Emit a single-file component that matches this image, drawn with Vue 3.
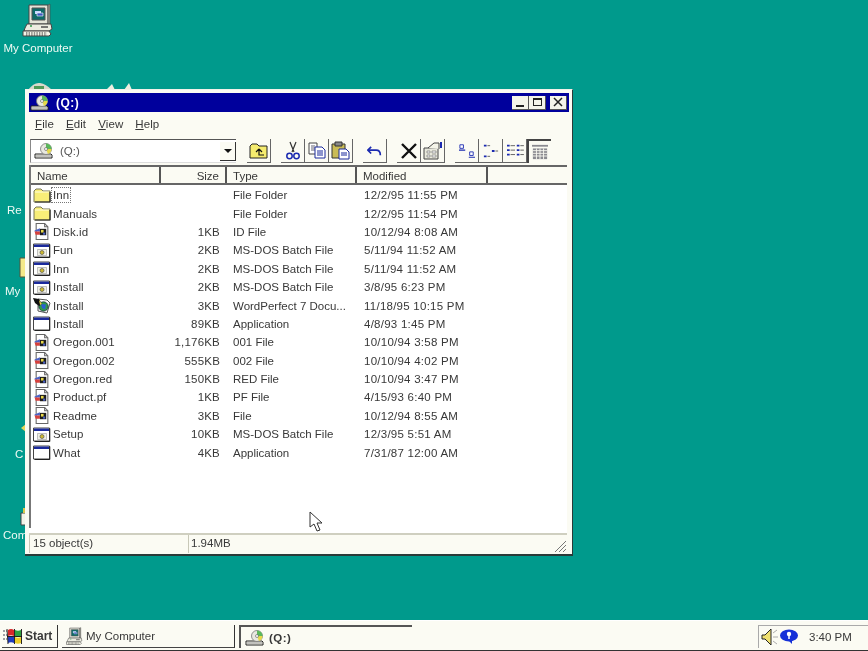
<template>
  <div class="desktop">
    <svg class="sprites" width="0" height="0" aria-hidden="true">
      <defs>
        <symbol id="i-drive" viewBox="0 0 20 16">
          <path d="M1 11h16l1 1v3H1z" fill="#fbfbf3" stroke="#222" stroke-width="1"/>
          <path d="M2 13h15" stroke="#888"/>
          <circle cx="12" cy="6" r="5.5" fill="#e8e8e0" stroke="#777" stroke-width=".8"/>
          <path d="M12 6V.5A5.5 5.5 0 0 1 17.5 6z" fill="#5bb85b"/>
          <path d="M12 6h5.5A5.5 5.5 0 0 1 14 11z" fill="#e6d94a"/>
          <circle cx="12" cy="6" r="1.5" fill="#fff" stroke="#555" stroke-width=".6"/>
        </symbol>
        <symbol id="i-folder" viewBox="0 0 18 15">
          <path d="M1 3l2-2h5l2 2h7v11H1z" fill="#f8ee78" stroke="#77775a"/>
          <path d="M2 4h14" stroke="#fffde0"/>
          <path d="M17 4v10H2" fill="none" stroke="#222" stroke-width="1.2"/>
        </symbol>
        <symbol id="i-doc" viewBox="0 0 16 16">
          <path d="M2.500.5h8l3 3v12h-11z" fill="#fff" stroke="#666"/>
          <path d="M10.500.5v3h3" fill="none" stroke="#666"/>
          <path d="M1 7l5-2v3H1z" fill="#4a62c8"/>
          <path d="M1 8h5v3H2z" fill="#d8403c"/>
          <path d="M6 5.500h6v6H6z" fill="#1c1c1c"/>
          <path d="M7 6.500h2.500V9H7z" fill="#e8d84a"/>
          <path d="M9 9h2v2H9z" fill="#4a62c8"/>
        </symbol>
        <symbol id="i-bat" viewBox="0 0 18 16">
          <path d="M.5 1.5h16v13H.5z" fill="#fff" stroke="#444"/>
          <path d="M1 2h15v2.5H1z" fill="#1b2a9c"/>
          <path d="M16.8 2v13H1.5" fill="none" stroke="#222"/>
          <path d="M4.5 7h9v6h-9z" fill="#f0f0e4" stroke="#999" stroke-width=".6"/>
          <circle cx="9" cy="10" r="2" fill="#cdb92e" stroke="#555" stroke-width=".7"/>
        </symbol>
        <symbol id="i-app" viewBox="0 0 18 16">
          <path d="M.5 1.5h16v13H.5z" fill="#fff" stroke="#444"/>
          <path d="M1 2h15v2.5H1z" fill="#1b2a9c"/>
          <path d="M16.8 2v13H1.5" fill="none" stroke="#222"/>
        </symbol>
        <symbol id="i-wp" viewBox="0 0 18 17">
          <path d="M5 2l9 1 3 3-3 10-9-2z" fill="#fff" stroke="#555"/>
          <circle cx="10.500" cy="9.500" r="4.700" fill="#2f9a4a" stroke="#123" stroke-width=".7"/>
          <path d="M8 7l5 .5-1 5-3-1.500z" fill="#2a5fd0"/>
          <path d="M0 1l6 1 3 5-3 2-4-3z" fill="#101010"/>
          <path d="M6 3l3 4-2 1z" fill="#e8d84a"/>
        </symbol>
        <symbol id="i-computer" viewBox="0 0 34 34">
          <path d="M7 2h19v19H7z" fill="#e4e4d8" stroke="#444"/>
          <path d="M26 2l2-1v20l-2 1z" fill="#9c9c90" stroke="#444" stroke-width=".6"/>
          <path d="M10 5h13v12H10z" fill="#0f6a68" stroke="#555"/>
          <path d="M13 8h6v3h-6z" fill="#c8d8ff"/>
          <path d="M15 10h6v3h-6z" fill="#3c58c0" stroke="#fff" stroke-width=".6"/>
          <path d="M5 21h24l1 5-3 2H2l1-3z" fill="#ececE0" stroke="#444"/>
          <path d="M19 24h7" stroke="#444" stroke-width="1.4"/>
          <path d="M8 23h2" stroke="#2e9a4a" stroke-width="1.4"/>
          <path d="M1 28h26l2 3-2 2H1z" fill="#f4f4e8" stroke="#444"/>
          <path d="M4 30h21M4 32h21" stroke="#333" stroke-dasharray="1.4 1.2"/>
        </symbol>
      </defs>
    </svg>

    <!-- desktop icons, mostly hidden behind the window -->
    <div class="desk-icon computer">
      <svg width="34" height="34"><use href="#i-computer"/></svg>
      <span>My Computer</span>
    </div>
    <span class="desk-label" style="left: 7px; top: 204px">Re</span>
    <span class="desk-label" style="left: 5px; top: 285px">My</span>
    <span class="desk-label" style="left: 15px; top: 448px">C</span>
    <span class="desk-label" style="left: 3px; top: 529px">Com</span>
    <svg class="peek" style="left: 26px; top: 82px" width="28" height="8"><path d="M2 8q6-8 12-7t12 7z" fill="#d8d8cc"/><path d="M8 4h10v4H8z" fill="#4f9a58"/></svg>
    <svg class="peek" style="left: 104px; top: 82px" width="34" height="8"><path d="M2 8l6-6 3 6zM20 8l5-7 3 7z" fill="#eeeee0"/></svg>
    <svg class="peek" style="left: 19px; top: 256px" width="8" height="22"><path d="M1 2h7v19H1z" fill="#f4e98a" stroke="#55553a"/></svg>
    <svg class="peek" style="left: 21px; top: 424px" width="6" height="8"><path d="M5 0v8L0 4z" fill="#e6d85a"/></svg>
    <svg class="peek" style="left: 19px; top: 508px" width="8" height="18"><path d="M2 5h6v12H2z" fill="#f4f4e8" stroke="#444"/><path d="M5 0v5" stroke="#d8c84a" stroke-width="2"/></svg>

    <section class="window">
      <header class="title-bar">
        <svg width="20" height="16"><use href="#i-drive"/></svg>
        <strong>(Q:)</strong>
        <div class="win-buttons">
          <button class="win-btn"><i class="glyph-min"></i></button>
          <button class="win-btn"><i class="glyph-max"></i></button>
          <button class="win-btn close">
            <svg width="10" height="10"><path d="M1 1l8 8M9 1l-8 8" stroke="#222" stroke-width="1.500"/></svg>
          </button>
        </div>
      </header>

      <nav class="menu-bar">
        <span v-for="m in menus" :key="m.rest"><u>{{ m.key }}</u>{{ m.rest }}</span>
      </nav>

      <div class="toolbar">
        <div class="combo">
          <svg width="20" height="16"><use href="#i-drive"/></svg>
          <span>(Q:)</span>
          <button class="combo-arrow"><i></i></button>
        </div>
        <div class="tool-group first">
          <button class="tool">
            <svg width="20" height="17" viewBox="0 0 20 17"><path d="M1 4l2-2h5l2 2h8v12H1z" fill="#f5ec6e" stroke="#222"/><path d="M10 7v6h5M10 7l-3 3M10 7l3 3" fill="none" stroke="#111" stroke-width="1.200"/></svg>
          </button>
        </div>
        <div class="tool-group">
          <button class="tool">
            <svg width="14" height="19" viewBox="0 0 14 19"><path d="M4 1l4 10M10 1L6 11" stroke="#333" stroke-width="1.200"/><circle cx="3.500" cy="15" r="2.700" fill="none" stroke="#1b2ab0" stroke-width="1.500"/><circle cx="10.500" cy="15" r="2.700" fill="none" stroke="#1b2ab0" stroke-width="1.500"/></svg>
          </button>
          <button class="tool">
            <svg width="18" height="17" viewBox="0 0 18 17"><path d="M1 1h8v11H1z" fill="#fff" stroke="#444"/><path d="M3 4h4M3 6h4M3 8h4" stroke="#667"/><path d="M7 5h7l3 3v8H7z" fill="#fff" stroke="#1b2a9c"/><path d="M9 9h6M9 11h6M9 13h6" stroke="#1b2a9c"/></svg>
          </button>
          <button class="tool">
            <svg width="19" height="19" viewBox="0 0 19 19"><path d="M1 3h13v14H1z" fill="#c9bb55" stroke="#333"/><path d="M4 1h7v4H4z" fill="#888" stroke="#333"/><path d="M8 8h7l3 3v7H8z" fill="#fff" stroke="#1b2a9c"/><path d="M10 12h6M10 14h6" stroke="#1b2a9c"/></svg>
          </button>
        </div>
        <div class="tool-group">
          <button class="tool">
            <svg width="15" height="10" viewBox="0 0 18 12"><path d="M5 1L1 5l4 4" fill="none" stroke="#1b2ab0" stroke-width="2"/><path d="M2 5h9q5 0 5 6" fill="none" stroke="#1b2ab0" stroke-width="2"/></svg>
          </button>
        </div>
        <div class="tool-group">
          <button class="tool">
            <svg width="18" height="18"><path d="M2 2l14 14M16 2L2 16" stroke="#111" stroke-width="2.400"/></svg>
          </button>
          <button class="tool">
            <svg width="22" height="19" viewBox="0 0 22 19"><path d="M2 7h14v11H2z" fill="#e8e8dc" stroke="#444"/><path d="M5 10h3v2H5zM10 10h4v2h-4zM5 14h3v2H5zM10 14h4v2h-4z" fill="#fff" stroke="#666" stroke-width=".6"/><path d="M6 7l6-5h5v6" fill="#f4f4e8" stroke="#444"/><path d="M19 1v6" stroke="#1b2ab0" stroke-width="2"/></svg>
          </button>
        </div>
        <div class="tool-group">
          <button class="tool">
            <svg width="20" height="16" viewBox="0 0 22 18"><path d="M3 2h4v4H3zM14 10h4v4h-4z" fill="#fff" stroke="#1b2ab0"/><path d="M2 8h7M13 16h7" stroke="#1b2ab0" stroke-width="1.200"/></svg>
          </button>
          <button class="tool">
            <svg width="20" height="16" viewBox="0 0 22 18"><path d="M3 2h3v2H3zM3 14h3v2H3zM12 8h3v2h-3z" fill="#1b2ab0"/><path d="M7 3h3M16 9h3M7 15h3" stroke="#555"/></svg>
          </button>
          <button class="tool">
            <svg width="20" height="16" viewBox="0 0 22 18"><path d="M2 2h3v2H2zM2 7h3v2H2zM2 12h3v2H2zM13 2h3v2h-3zM13 7h3v2h-3zM13 12h3v2h-3z" fill="#1b2ab0"/><path d="M6 3h5M6 8h5M6 13h5M17 3h4M17 8h4M17 13h4" stroke="#555"/></svg>
          </button>
          <button class="tool pressed">
            <svg width="18" height="16" viewBox="0 0 20 18"><path d="M1 2h18" stroke="#8a8a90" stroke-width="2"/><path d="M2 5h16v12H2z" fill="#8a8a90"/><path d="M2 7.500h16M2 10.500h16M2 13.500h16M6 5v12M10 5v12M14 5v12" stroke="#fbfbf3"/></svg>
          </button>
        </div>
      </div>

      <div class="list-wrap">
        <div class="list-head row-grid">
          <span class="col-name">Name</span>
          <span class="col-size">Size</span>
          <span class="col-type">Type</span>
          <span class="col-mod">Modified</span>
          <span></span>
        </div>
        <div class="rows">
          <div v-for="(f, i) in files" :key="i" class="row row-grid">
            <span class="name-cell">
              <svg width="18" height="17"><use :href="'#i-' + f.icon"/></svg>
              <span class="fname" :class="{ focused: i === 0 }">{{ f.name }}</span>
            </span>
            <span class="size-cell">{{ f.size }}</span>
            <span class="type-cell">{{ f.type }}</span>
            <span class="mod-cell">{{ f.modified }}</span>
          </div>
        </div>
      </div>

      <footer class="status">
        <span class="pane objects">15 object(s)</span>
        <span class="pane free">1.94MB</span>
        <svg class="grip" width="13" height="13"><path d="M12 1L1 12M12 5l-7 7M12 9l-3 3" stroke="#777" stroke-width="1"/></svg>
      </footer>

      <svg class="cursor" width="14" height="21" viewBox="0 0 14 21"><path d="M1 1v15l4-3 3 7 3-1-3-7h5z" fill="#fff" stroke="#333"/></svg>
    </section>

    <div class="taskbar">
      <button class="task-btn start">
        <svg width="20" height="18" viewBox="0 0 20 18">
          <path d="M0 4h4M0 8h4M0 12h4" stroke="#445" stroke-dasharray="2 1"/>
          <path d="M5 3q3-2 6 0v6q-3-1.500-6 0z" fill="#d8282a"/>
          <path d="M12 3q3 1.500 6 0v6q-3 1.500-6 0z" fill="#2ea040"/>
          <path d="M5 10q3-1.500 6 0v6q-3-1.500-6 0z" fill="#1f3cc0"/>
          <path d="M12 10q3 1.500 6 0v6q-3 1.500-6 0z" fill="#eccd2a"/>
          <path d="M4 2l1 15M11.500 2v15M18.500 2v15M4 9.500h15" stroke="#111" stroke-width=".9" fill="none"/>
        </svg>
        <strong>Start</strong>
      </button>
      <button class="task-btn app">
        <svg width="20" height="18"><use href="#i-computer"/></svg>
        <span>My Computer</span>
      </button>
      <button class="task-btn app active">
        <svg width="20" height="16"><use href="#i-drive"/></svg>
        <strong>(Q:)</strong>
      </button>
      <div class="tray">
        <svg width="18" height="18" viewBox="0 0 18 18"><path d="M1 7h3l6-6v16l-6-6H1z" fill="#efe070" stroke="#222"/><path d="M12 5l4-3M12 9h5M12 13l4 3" stroke="#aaa"/></svg>
        <svg width="20" height="16" viewBox="0 0 20 16"><ellipse cx="10" cy="6.500" rx="9" ry="6" fill="#1530d8"/><path d="M9 11l4 4v-4z" fill="#1530d8"/><circle cx="10" cy="5" r="2.200" fill="#fff"/><path d="M10 6v4" stroke="#fff" stroke-width="1.500"/></svg>
        <span>3:40 PM</span>
      </div>
    </div>
  </div>
</template>

<script setup>
const menus = [
  { key: 'F', rest: 'ile' },
  { key: 'E', rest: 'dit' },
  { key: 'V', rest: 'iew' },
  { key: 'H', rest: 'elp' }
];

const BAT = 'MS-DOS Batch File';

const files = [
  { icon: 'folder', name: 'Inn', size: '', type: 'File Folder', modified: '12/2/95 11:55 PM' },
  { icon: 'folder', name: 'Manuals', size: '', type: 'File Folder', modified: '12/2/95 11:54 PM' },
  { icon: 'doc', name: 'Disk.id', size: '1KB', type: 'ID File', modified: '10/12/94 8:08 AM' },
  { icon: 'bat', name: 'Fun', size: '2KB', type: BAT, modified: '5/11/94 11:52 AM' },
  { icon: 'bat', name: 'Inn', size: '2KB', type: BAT, modified: '5/11/94 11:52 AM' },
  { icon: 'bat', name: 'Install', size: '2KB', type: BAT, modified: '3/8/95 6:23 PM' },
  { icon: 'wp', name: 'Install', size: '3KB', type: 'WordPerfect 7 Docu...', modified: '11/18/95 10:15 PM' },
  { icon: 'app', name: 'Install', size: '89KB', type: 'Application', modified: '4/8/93 1:45 PM' },
  { icon: 'doc', name: 'Oregon.001', size: '1,176KB', type: '001 File', modified: '10/10/94 3:58 PM' },
  { icon: 'doc', name: 'Oregon.002', size: '555KB', type: '002 File', modified: '10/10/94 4:02 PM' },
  { icon: 'doc', name: 'Oregon.red', size: '150KB', type: 'RED File', modified: '10/10/94 3:47 PM' },
  { icon: 'doc', name: 'Product.pf', size: '1KB', type: 'PF File', modified: '4/15/93 6:40 PM' },
  { icon: 'doc', name: 'Readme', size: '3KB', type: 'File', modified: '10/12/94 8:55 AM' },
  { icon: 'bat', name: 'Setup', size: '10KB', type: BAT, modified: '12/3/95 5:51 AM' },
  { icon: 'app', name: 'What', size: '4KB', type: 'Application', modified: '7/31/87 12:00 AM' }
];
</script>

<style>
html, body {
  margin: 0;
  overflow: hidden;
}
</style>

<style scoped>
.desktop {
  position: relative;
  width: 868px;
  height: 651px;
  overflow: hidden;
  background: #009a8c;
  font-family: "Liberation Sans", Arial, sans-serif;
  font-size: 11.5px;
  color: #383838;
  filter: blur(0.4px);
}

.sprites {
  position: absolute;
}

button {
  font: inherit;
  color: inherit;
  background: none;
  border: 0;
  padding: 0;
  margin: 0;
}

.desk-icon {
  position: absolute;
  left: 3px;
  top: 3px;
  width: 70px;
  display: flex;
  flex-direction: column;
  align-items: center;
  gap: 5px;
  color: #eefaf4;
  white-space: nowrap;
}

.desk-icon svg {
  margin-left: 1px;
}

.desk-label {
  position: absolute;
  color: #eefaf4;
}

.peek {
  position: absolute;
}

.window {
  position: absolute;
  left: 25px;
  top: 89px;
  width: 548px;
  height: 467px;
  box-sizing: border-box;
  padding: 3px 3px 1px 4px;
  display: flex;
  flex-direction: column;
  background: #fbfbf3;
  border-right: 1px solid #2a3a38;
  border-bottom: 2px solid #2a3a38;
  border-top: 1px solid #f2f2ea;
}

.title-bar {
  height: 19px;
  flex: none;
  display: flex;
  align-items: center;
  gap: 6px;
  padding: 0 2px 0 1px;
  background: #00009c;
  color: #fff;
}

.title-bar strong {
  font-size: 12px;
  letter-spacing: 0.5px;
}

.win-buttons {
  margin-left: auto;
  display: flex;
}

.win-btn {
  width: 17px;
  height: 14px;
  display: flex;
  align-items: center;
  justify-content: center;
  background: #f4f4ea;
  border-right: 1px solid #555;
  border-bottom: 1px solid #555;
  box-sizing: border-box;
}

.win-btn.close {
  margin-left: 4px;
}

.glyph-min {
  width: 8px;
  height: 2px;
  background: #222;
  margin-top: 7px;
}

.glyph-max {
  width: 9px;
  height: 8px;
  box-sizing: border-box;
  border: 1px solid #222;
  border-top-width: 2px;
}

.menu-bar {
  height: 27px;
  flex: none;
  display: flex;
  align-items: center;
  gap: 12px;
  padding: 0 0 3px 6px;
  box-sizing: border-box;
  letter-spacing: 0.1px;
}

.toolbar {
  height: 26px;
  flex: none;
  display: flex;
  align-items: stretch;
  padding-left: 1px;
}

.combo {
  width: 206px;
  height: 24px;
  box-sizing: border-box;
  display: flex;
  align-items: center;
  gap: 6px;
  padding-left: 3px;
  background: #fff;
  border-top: 1px solid #555;
  border-left: 1px solid #888;
  border-bottom: 1px solid #ddd;
  position: relative;
  color: #555;
}

.combo-arrow {
  margin-left: auto;
  width: 16px;
  height: 19px;
  display: flex;
  align-items: center;
  justify-content: center;
  background: #fbfbf3;
  border-right: 1px solid #333;
  border-bottom: 1px solid #333;
}

.combo-arrow i {
  width: 0;
  height: 0;
  border-left: 4px solid transparent;
  border-right: 4px solid transparent;
  border-top: 4px solid #111;
}

.tool-group {
  display: flex;
  margin-left: 10px;
}

.tool-group.first {
  margin-left: 11px;
}

.tool {
  width: 24px;
  height: 24px;
  box-sizing: border-box;
  display: flex;
  align-items: center;
  justify-content: center;
  border-right: 1px solid #666;
  border-bottom: 1px solid #666;
}

.tool.pressed {
  border: 0;
  border-top: 2px solid #444;
  border-left: 2px solid #444;
}

.list-wrap {
  flex: 1;
  min-height: 0;
  display: flex;
  flex-direction: column;
  padding-left: 2px;
  margin-right: 2px;
  background: linear-gradient(#777, #777) left top / 2px calc(100% - 5px) no-repeat, #fff;
}

.row-grid {
  display: grid;
  grid-template-columns: 130px 66px 130px 131px 1fr;
  align-items: center;
}

.list-head {
  height: 20px;
  flex: none;
  background: #fbfbf3;
  border-top: 2px solid #666;
  border-bottom: 2px solid #666;
  box-sizing: border-box;
}

.list-head span {
  height: 100%;
  display: flex;
  align-items: center;
  box-sizing: border-box;
  padding-top: 1px;
  border-right: 2px solid #555;
}

.list-head span:last-child {
  border-right: 0;
}

.col-name {
  padding-left: 6px;
}

.col-size {
  justify-content: flex-end;
  padding-right: 6px;
}

.col-type,
.col-mod {
  padding-left: 6px;
}

.rows {
  flex: 1;
  padding-top: 1px;
}

.row {
  height: 18.4px;
}

.name-cell {
  display: flex;
  align-items: center;
  gap: 0;
  padding-left: 2px;
}

.fname {
  padding: 0 1px;
  border: 1px dotted transparent;
  line-height: 14px;
  letter-spacing: 0.1px;
}

.fname.focused {
  border-color: #777;
}

.size-cell {
  text-align: right;
  padding-right: 7px;
  letter-spacing: 0.2px;
}

.type-cell {
  padding-left: 6px;
  white-space: nowrap;
}

.mod-cell {
  padding-left: 7px;
  white-space: nowrap;
  letter-spacing: 0.25px;
}

.status {
  height: 18px;
  flex: none;
  display: flex;
  gap: 4px;
  border-top: 2px solid #cfcfc0;
  position: relative;
  margin-right: 2px;
}

.pane {
  display: flex;
  align-items: center;
  padding: 0 0 2px 3px;
  box-sizing: border-box;
  border-left: 1px solid #c8c8b8;
}

.objects {
  width: 155px;
}

.free {
  flex: 1;
  padding-left: 2px;
}

.grip {
  position: absolute;
  right: 0;
  bottom: 0;
}

.cursor {
  position: absolute;
  left: 284px;
  top: 421px;
}

.taskbar {
  position: absolute;
  left: 0;
  right: 0;
  bottom: 0;
  height: 31px;
  box-sizing: border-box;
  padding: 4px 0 2px 2px;
  display: flex;
  align-items: stretch;
  gap: 4px;
  background: #fbfbf3;
  border-top: 1px solid #fff;
  border-bottom: 1px solid #333;
}

.task-btn {
  display: flex;
  align-items: center;
  gap: 1px;
  box-sizing: border-box;
  border-right: 1px solid #333;
  border-bottom: 1px solid #444;
}

.task-btn.start {
  width: 56px;
  padding-left: 1px;
  gap: 2px;
}

.task-btn.start strong {
  font-size: 12px;
}

.task-btn.app {
  width: 173px;
  padding-left: 3px;
}

.task-btn.active {
  border: 0;
  border-top: 2px solid #555;
  border-left: 2px solid #555;
  gap: 4px;
  padding-left: 4px;
  letter-spacing: 0.5px;
}

.tray {
  margin-left: auto;
  width: 110px;
  box-sizing: border-box;
  display: flex;
  align-items: center;
  padding-left: 2px;
  border-top: 1px solid #aaa;
  border-left: 1px solid #aaa;
}

.tray span {
  margin-left: 10px;
}
</style>
